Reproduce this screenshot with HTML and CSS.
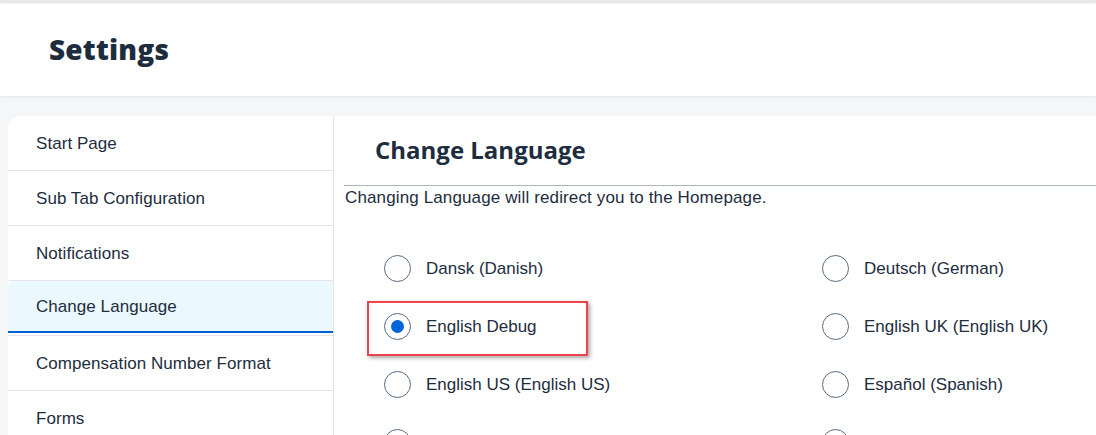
FILE: index.html
```html
<!DOCTYPE html>
<html lang="en">
<head>
<meta charset="utf-8">
<title>Settings</title>
<link rel="stylesheet" href="styles.css">
</head>
<body>
<div class="shell-strip"></div>
<header class="page-header">
  <h1 class="page-title">Settings</h1>
</header>
<main class="page-main">
  <nav class="side-nav">
    <ul class="nav-list">
      <li class="nav-item">Start Page</li>
      <li class="nav-item">Sub Tab Configuration</li>
      <li class="nav-item">Notifications</li>
      <li class="nav-item selected">Change Language</li>
      <li class="nav-item">Compensation Number Format</li>
      <li class="nav-item">Forms</li>
    </ul>
  </nav>
  <section class="content">
    <div class="content-head">
      <h2 class="content-title">Change Language</h2>
    </div>
    <p class="content-desc">Changing Language will redirect you to the Homepage.</p>
    <div class="radio-grid">
      <label class="radio-row"><span class="radio"></span><span class="radio-label">Dansk (Danish)</span></label>
      <label class="radio-row"><span class="radio"></span><span class="radio-label">Deutsch (German)</span></label>
      <label class="radio-row highlighted"><span class="radio checked"></span><span class="radio-label">English Debug</span><span class="callout"></span></label>
      <label class="radio-row"><span class="radio"></span><span class="radio-label">English UK (English UK)</span></label>
      <label class="radio-row"><span class="radio"></span><span class="radio-label">English US (English US)</span></label>
      <label class="radio-row"><span class="radio"></span><span class="radio-label">Español (Spanish)</span></label>
      <label class="radio-row"><span class="radio"></span><span class="radio-label">Français (French)</span></label>
      <label class="radio-row"><span class="radio"></span><span class="radio-label">Italiano (Italian)</span></label>
    </div>
  </section>
</main>
</body>
</html>
```
FILE: styles.css
```css
* { box-sizing: border-box; }
html, body {
  margin: 0;
  padding: 0;
  height: 100%;
  overflow: hidden;
}
body {
  font-family: "Liberation Sans", Arial, sans-serif;
  color: #1d2d3e;
  background: #f5f6f7;
}
.shell-strip {
  height: 3px;
  background: #e6e7e9;
  box-shadow: 0 1px 2px rgba(0,0,0,0.06);
  position: relative;
  z-index: 2;
}
.page-header {
  height: 93px;
  background: #fff;
  display: flex;
  align-items: center;
  padding-left: 49px;
  box-shadow: 0 1px 2px rgba(0,0,0,0.07);
  position: relative;
  z-index: 1;
}
.page-title {
  margin: 0;
  font-family: "Open Sans", "Noto Sans", sans-serif;
  font-size: 28px;
  font-weight: 800;
  letter-spacing: 0.2px;
  padding-bottom: 2px;
}
.page-main {
  display: flex;
  padding: 20px 0 0 8px;
  height: calc(100% - 96px);
}
.side-nav {
  width: 326px;
  flex: none;
  background: #fff;
  border-top-left-radius: 12px;
  border-right: 1px solid #e5e5e5;
  overflow: hidden;
}
.nav-list {
  list-style: none;
  margin: 0;
  padding: 0;
}
.nav-item {
  height: 55px;
  border-bottom: 1px solid #e5e5e5;
  display: flex;
  align-items: center;
  padding: 1px 0 0 28px;
  font-size: 17px;
  letter-spacing: 0.05px;
}
.nav-item.selected {
  background: #ebf8ff;
  border-top-left-radius: 6px;
  box-shadow: inset 0 -2px 0 #fff, inset 0 -4px 0 #0064d9;
  padding-bottom: 3px;
}
.content {
  flex: 1;
  background: #fff;
  padding-left: 10px;
  min-width: 0;
}
.content-head {
  height: 70px;
  border-bottom: 1px solid #a9b4be;
  padding: 0 0 0 31px;
  display: flex;
  align-items: center;
}
.content-title {
  margin: 0;
  font-family: "Open Sans", "Noto Sans", sans-serif;
  font-size: 24px;
  font-weight: 700;
  padding-bottom: 2px;
}
.content-desc {
  margin: 0;
  font-size: 17px;
  line-height: 21px;
  padding: 1px 0 0 1px;
  letter-spacing: 0.13px;
}
.radio-grid {
  display: grid;
  grid-template-columns: 438px 1fr;
  grid-auto-rows: 58px;
  padding: 31px 0 0 40px;
}
.radio-row {
  position: relative;
  display: flex;
  align-items: center;
  font-size: 17px;
}
.radio-label {
  padding-top: 1px;
}
.radio {
  width: 27px;
  height: 27px;
  border: 1px solid #556b82;
  border-radius: 50%;
  flex: none;
  margin-right: 15px;
  display: flex;
  align-items: center;
  justify-content: center;
}
.radio.checked::after {
  content: "";
  width: 13px;
  height: 13px;
  border-radius: 50%;
  background: #0064d9;
}
.callout {
  position: absolute;
  left: -17px;
  top: 4px;
  width: 221px;
  height: 55px;
  border: 2px solid #ec4448;
  box-shadow: 2px 2px 4px rgba(0,0,0,0.35);
  pointer-events: none;
}
```
